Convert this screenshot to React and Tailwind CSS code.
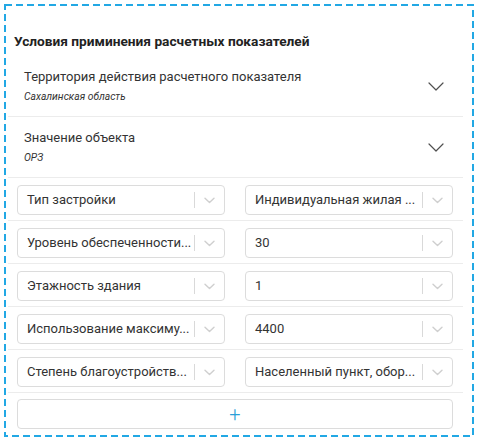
import React from "react";

const font = { fontFamily: "Roboto, 'Liberation Sans', Arial, sans-serif" };

function BigChevron() {
  return (
    <svg width="16" height="9" viewBox="0 0 16 9" fill="none">
      <path d="M1 1l7 7 7-7" stroke="#505050" strokeWidth="1.2" strokeLinecap="round" strokeLinejoin="round" />
    </svg>
  );
}

function SmallChevron() {
  return (
    <svg width="11" height="7" viewBox="0 0 11 7" fill="none">
      <path d="M1 1.2l4.5 4.3L10 1.2" stroke="#cfcfcf" strokeWidth="1.4" strokeLinecap="round" strokeLinejoin="round" />
    </svg>
  );
}

function Accordion({ title, sub }) {
  return (
    <div className="flex items-center justify-between border-b border-[#ececec] pl-[16px] pr-[19px] py-[11px]">
      <div className="flex flex-col gap-[2px]">
        <div className="text-[13px] leading-[20px] text-[#333]">{title}</div>
        <div className="text-[10.3px] leading-[16px] italic text-[#333]">{sub}</div>
      </div>
      <div className="mt-[1px]">
        <BigChevron />
      </div>
    </div>
  );
}

function Select({ value }) {
  return (
    <div className="flex h-[30px] items-center rounded-[4px] border border-[#dcdcdc] bg-white">
      <div className="min-w-0 flex-1 truncate pl-[9px] pr-[2px] text-[13px] text-[#333]">{value}</div>
      <div className="h-[16px] w-px bg-[#d9d9d9]" />
      <div className="flex w-[29px] items-center justify-center">
        <SmallChevron />
      </div>
    </div>
  );
}

const rows = [
  ["Тип застройки", "Индивидуальная жилая ..."],
  ["Уровень обеспеченности...", "30"],
  ["Этажность здания", "1"],
  ["Использование максиму...", "4400"],
  ["Степень благоустройств...", "Населенный пункт, обор..."],
];

export default function App() {
  return (
    <div className="w-[477px] h-[441px] bg-white pt-[4px] pl-[4px]" style={font}>
      <div className="relative flex h-[433px] w-[470px] flex-col p-[2px] pt-[27px] pb-[6px]">
        <svg className="pointer-events-none absolute inset-0" width="470" height="433">
          <rect x="1" y="1" width="468" height="431" fill="none" stroke="#22a8e4" strokeWidth="2" strokeDasharray="7 4" />
        </svg>
        <div className="pl-[8px] text-[13.7px] font-bold leading-[20px] text-[#222]">
          Условия приминения расчетных показателей
        </div>
        <div className="mt-[5px] ml-[2px] mr-[9px] flex flex-col">
          <Accordion title="Территория действия расчетного показателя" sub="Сахалинская область" />
          <Accordion title="Значение объекта" sub="ОРЗ" />
          {rows.map(([a, b]) => (
            <div key={a} className="grid grid-cols-2 gap-[20px] border-b border-[#ececec] pl-[9px] pr-[10px] pt-[7px] pb-[5px]">
              <Select value={a} />
              <Select value={b} />
            </div>
          ))}
          <div className="pl-[9px] pr-[10px] pt-[6px]">
            <div className="flex h-[30px] items-center justify-center rounded-[4px] border border-[#dcdcdc]">
              <span className="text-[20px] font-light leading-none text-[#2a9fd8]">+</span>
            </div>
          </div>
        </div>
      </div>
    </div>
  );
}
